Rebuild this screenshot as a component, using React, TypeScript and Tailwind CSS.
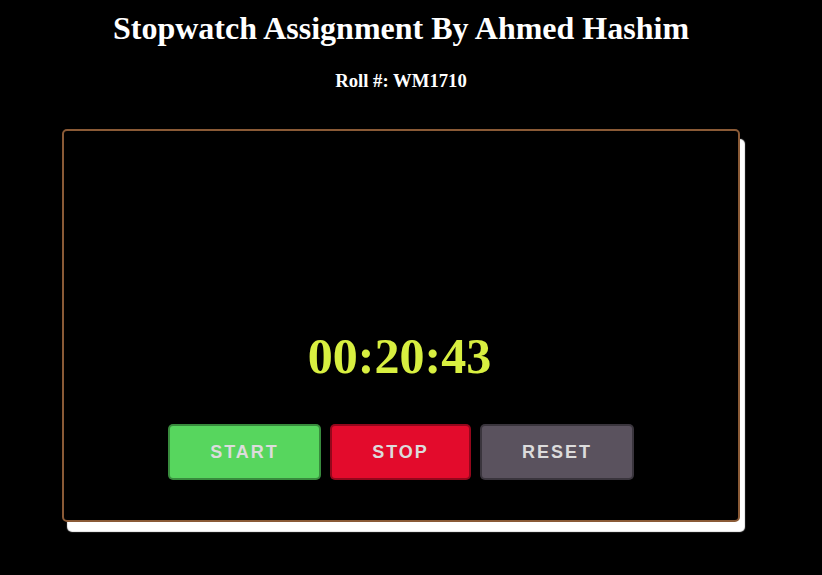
import React from "react";

export default function App() {
  const btn =
    "h-[56px] rounded-[5px] border-2 border-black/35 text-[18px] font-bold tracking-[2px] text-[#dcdcdc] flex items-center justify-center";
  return (
    <div className="min-h-screen w-full bg-black">
      <div className="w-[802px] flex flex-col items-center pt-[10px] [font-family:'Liberation_Serif',serif]">
        <h1 className="text-[32px] leading-[36.8px] font-bold text-white">
          Stopwatch Assignment By Ahmed Hashim
        </h1>
        <h3 className="mt-[23px] text-[18.72px] leading-[21.5px] font-bold text-white">
          Roll #: WM1710
        </h3>
        <div className="mt-[38px] w-[678px] h-[393px] border-2 border-[#8a5a36] rounded-[5px] shadow-[5px_10px_1px_#ffffff] bg-black flex flex-col items-center justify-end pb-[40px]">
          <div className="text-[50px] leading-[57px] font-bold text-[#d8ef40] -ml-[3px]">
            00:20:43
          </div>
          <div className="mt-[39px] flex gap-[9px] [font-family:'Liberation_Sans',Arial,sans-serif]">
            <button className={`${btn} w-[153px] bg-[#57d65e]`}>START</button>
            <button className={`${btn} w-[141px] bg-[#e30b2c]`}>STOP</button>
            <button className={`${btn} w-[154px] bg-[#5a525e]`}>RESET</button>
          </div>
        </div>
      </div>
    </div>
  );
}
